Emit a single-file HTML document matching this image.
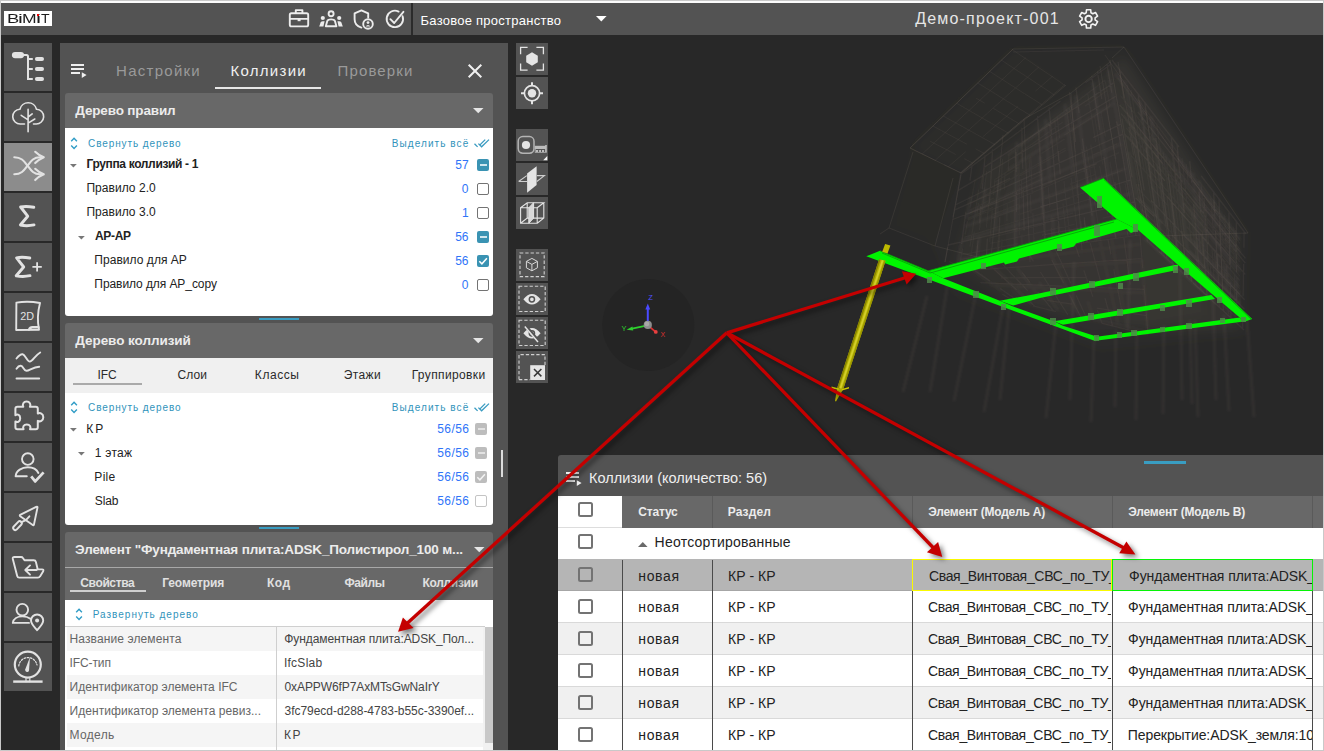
<!DOCTYPE html>
<html lang="ru"><head><meta charset="utf-8"><title>BIMIT</title>
<style>
html,body{margin:0;padding:0;}
body{width:1324px;height:751px;overflow:hidden;background:#282828;position:relative;font-family:"Liberation Sans",sans-serif;}
.a{position:absolute;}
.t{position:absolute;white-space:nowrap;}
.sb{position:absolute;left:4px;width:48px;height:48px;background:#535353;}
.tb{position:absolute;left:516px;width:32px;height:32px;background:#535353;}
svg{position:absolute;overflow:visible;}
.cb{position:absolute;box-sizing:border-box;border-radius:2px;}
</style></head><body>

<svg style="left:0;top:0" width="1324" height="751" viewBox="0 0 1324 751">
<circle cx="648.3" cy="324.9" r="46" fill="#242424"/>
<g id="giz">
<path d="M647.8 322V308" stroke="#4a4aff" stroke-width="2"/><path d="M647.8 303.6L650.2 309.6H645.4Z" fill="#4a4aff"/>
<path d="M645 325.8L631 328.9" stroke="#2fd02f" stroke-width="1.8"/><path d="M626.6 329.8L632.4 326.4L633.2 330.6Z" fill="#2fd02f"/>
<path d="M650.6 327.6L655 331.4" stroke="#e03030" stroke-width="1.8"/><circle cx="655.8" cy="331.9" r="1.9" fill="#e84040"/>
<circle cx="647.8" cy="324.9" r="4.1" fill="#8e8e8e"/><circle cx="646.9" cy="323.9" r="2.4" fill="#a8a8a8"/>
<text x="648.3" y="300.2" font-family="Liberation Sans, sans-serif" font-size="7.5" fill="#5050ff">Z</text>
<text x="621.6" y="331.4" font-family="Liberation Sans, sans-serif" font-size="7.5" fill="#2fd02f">Y</text>
<text x="660.4" y="336.6" font-family="Liberation Sans, sans-serif" font-size="7" fill="#d83030">X</text>
</g>
<defs><filter id="bl" x="-5%" y="-5%" width="110%" height="110%"><feGaussianBlur stdDeviation="0.5"/></filter><filter id="bl1" x="-5%" y="-5%" width="110%" height="110%"><feGaussianBlur stdDeviation="1.3"/></filter><filter id="bl2" x="-10%" y="-10%" width="120%" height="120%"><feGaussianBlur stdDeviation="5"/></filter></defs>
<g id="bld">
<g filter="url(#bl2)">
<path d="M1013 49L1124 47L1248 233L1246 335L1100 350L955 295L933 245L961 173L910 148Z" fill="#7a6a5e" fill-opacity="0.045" stroke="none"/>
<path d="M1013 49L910 148L961 173L1066 85Z" fill="#7a6a5e" fill-opacity="0.02" stroke="none"/>
<path d="M910 150L961 173L935 246L889 228Z" fill="#7a6a5e" fill-opacity="0.015" stroke="none"/>
<path d="M985 165L1110 66L1140 232L1148 330L1010 300L955 262Z" fill="#7a6a5e" fill-opacity="0.09" stroke="none"/>
<path d="M1110 66L1126 58L1236 232L1238 328L1148 332L1140 232Z" fill="#7a6a5e" fill-opacity="0.11" stroke="none"/>
<path d="M1040 120L1112 80L1200 215L1205 315L1090 335L1015 298L1005 200Z" fill="#7a6a5e" fill-opacity="0.06" stroke="none"/>
</g>
<g fill="none" stroke="#85766a" filter="url(#bl1)">
<path d="M970.8 196.8L966.5 218.5M962.2 240.2L958.0 262.0M985.6 188.0L982.6 211.8M979.6 235.5L976.6 259.2M998.9 180.2L997.0 205.7M997.0 205.7L995.1 231.3M1016.9 141.9L1016.5 169.8M1016.5 169.8L1016.1 197.7M1016.1 197.7L1015.7 225.6M1015.7 225.6L1015.3 253.5M1039.9 156.0L1041.5 187.1M1041.5 187.1L1043.1 218.1M1045.5 119.3L1047.7 151.4M1047.7 151.4L1050.0 183.5M1052.2 215.6L1054.5 247.7M1064.9 104.0L1068.9 139.0M1068.9 139.0L1073.0 173.9M1075.8 95.4L1080.9 131.9M1080.9 131.9L1085.9 168.5M1085.9 168.5L1091.0 205.0M1091.0 205.0L1096.0 241.5M1092.8 82.0L1099.4 121.0M1099.4 121.0L1106.0 160.0M1106.0 160.0L1112.6 199.1M1108.0 70.0L1116.0 111.2M1116.0 111.2L1124.0 152.5M1124.0 152.5L1132.0 193.8M1132.0 193.8L1140.0 235.0M1008.0 154.9L1041.9 129.8M1041.9 129.8L1075.9 104.6M1007.3 169.9L1043.0 147.5M1043.0 147.5L1078.7 125.2M1078.7 125.2L1114.4 102.8M967.4 213.7L1006.1 196.1M1006.1 196.1L1044.8 178.6M1044.8 178.6L1083.5 161.0M1083.5 161.0L1122.2 143.4M964.9 226.7L1005.4 212.1M1005.4 212.1L1046.0 197.4M1046.0 197.4L1086.5 182.8M1086.5 182.8L1127.0 168.1M962.3 240.0L1004.7 228.3M1004.7 228.3L1047.1 216.7M1047.1 216.7L1089.5 205.0M1089.5 205.0L1131.9 193.3M958.4 259.8L1003.6 252.5M1003.6 252.5L1048.8 245.2M1094.0 238.0L1139.2 230.7" stroke-opacity="0.09" stroke-width="3"/>
<path d="M1129.0 152.0L1136.5 195.0M1124.7 80.4L1131.6 121.7M1131.6 121.7L1138.4 162.9M1145.3 204.2L1152.1 245.5M1139.6 100.5L1145.6 139.3M1145.6 139.3L1151.5 178.2M1151.5 178.2L1157.5 217.0M1157.5 217.0L1163.5 255.9M1151.2 116.1L1156.4 153.1M1156.4 153.1L1161.7 190.0M1161.7 190.0L1167.0 227.0M1171.2 201.1L1175.9 236.3M1175.9 236.3L1180.5 271.5M1179.1 181.6L1182.9 214.7M1182.9 214.7L1186.8 247.7M1186.8 247.7L1190.6 280.7M1193.0 172.6L1195.8 202.8M1195.8 202.8L1198.6 232.9M1198.6 232.9L1201.4 263.0M1201.4 263.0L1204.2 293.2M1198.8 180.5L1201.3 209.6M1201.3 209.6L1203.7 238.8M1203.7 238.8L1206.2 268.0M1206.2 268.0L1208.6 297.2M1214.0 200.9L1215.5 227.6M1217.1 254.4L1218.6 281.1M1226.0 264.8L1227.0 289.8M1236.7 277.1L1236.9 300.2M1115.3 73.7L1146.5 115.3M1177.7 156.9L1208.8 198.5M1208.8 198.5L1240.0 240.0M1149.6 136.3L1179.8 175.1M1179.8 175.1L1209.9 213.8M1209.9 213.8L1240.0 252.5M1183.0 203.1L1211.5 237.5M1211.5 237.5L1240.0 271.8M1186.6 234.8L1213.3 264.2M1213.3 264.2L1240.0 293.6M1136.7 196.3L1162.5 223.3M1188.4 250.2L1214.2 277.2M1214.2 277.2L1240.0 304.2M1144.0 238.0L1168.0 260.0M1168.0 260.0L1192.0 282.0M1192.0 282.0L1216.0 304.0" stroke-opacity="0.09" stroke-width="3"/>
<path d="M961.7 261.4L975.0 271.3M975.0 271.3L988.2 281.1M988.2 281.1L1001.5 290.9M985.0 258.0L996.8 269.7M996.8 269.7L1008.6 281.4M1008.6 281.4L1020.4 293.1M1020.4 293.1L1032.2 304.7M1017.2 268.2L1027.6 281.7M1027.6 281.7L1038.0 295.1M1039.0 281.8L1048.6 296.4M1048.6 296.4L1058.2 310.9M1048.3 248.6L1056.1 265.4M1056.1 265.4L1063.9 282.2M1063.9 282.2L1071.7 299.1M1071.7 299.1L1079.5 315.9M1087.6 300.9L1094.1 319.3M1100.0 240.9L1104.5 261.9M1104.5 261.9L1109.0 283.0M1109.0 283.0L1113.6 304.0M1113.6 304.0L1118.1 325.0M1111.6 239.2L1115.4 261.2M1115.4 261.2L1119.2 283.1M1119.2 283.1L1123.0 305.1M1123.0 305.1L1126.8 327.0M1141.7 259.3L1143.7 283.5M1143.7 283.5L1145.8 307.7M1145.8 307.7L1147.8 331.9M963.1 265.6L1007.5 260.2M1007.5 260.2L1051.9 254.9M1051.9 254.9L1096.3 249.5M1096.3 249.5L1140.8 244.2M1057.3 266.5L1099.7 263.7M1099.7 263.7L1142.1 260.9M990.2 284.6L1028.8 286.7M1028.8 286.7L1067.5 288.7M1067.5 288.7L1106.1 290.8M1106.1 290.8L1144.8 292.8M1080.0 316.0L1114.0 324.0M1114.0 324.0L1148.0 332.0" stroke-opacity="0.07" stroke-width="3"/>
<g stroke-width="2.8" stroke-opacity="0.11"><path d="M927 296L903 392M975 298L954 401M1003 306L984 412M1056 322L1046 418M1094 340L1091 422M1116 330L1115 407M1137 330L1136 420M1164 325L1163 414M1190 320L1192 404M1195 320L1198 417M1224 315L1229 411M1247 320L1254 417"/><path d="M948 282L930 392M1010 300L1000 400M1074 262L1070 400M1130 240L1128 330M1180 270L1182 400M1213 298L1216 400"/></g>
</g>
<g fill="none" stroke="#85766a" stroke-width="1" filter="url(#bl)">
<path d="M1013 49L1124 47L1248 233M1013 49L910 148L961 173L1066 85M961 173L1024 119L1071 93L1110 62M913 152L889 228L935 246L953 178M1110 60L1140 232M1124 47L1112 58M1248 233L1160 236M935 246L1000 263M889 228L880 234" stroke-opacity="0.17"/>
<path d="M1105 55L1235 240M1100 66L1128 236M1118 62L1150 236M1071 93L1082 250M1024 119L1030 262M1003 135L990 268M961 175L945 262M1013 52L1104 50" stroke-opacity="0.13"/>
<path d="M1013.1 49.0L995.9 65.5M995.9 65.5L978.7 82.0M978.7 82.0L961.6 98.5M961.6 98.5L944.4 115.0M944.4 115.0L927.2 131.5M927.2 131.5L910.1 148.0M1025.7 57.6L1008.5 73.7M1008.5 73.7L991.2 89.7M991.2 89.7L974.0 105.8M974.0 105.8L956.7 121.9M956.7 121.9L939.5 137.9M939.5 137.9L922.2 154.0M1039.1 66.7L1021.8 82.3M1021.8 82.3L1004.5 97.9M1004.5 97.9L987.1 113.5M987.1 113.5L969.8 129.1M969.8 129.1L952.5 144.7M952.5 144.7L935.1 160.3M1052.8 76.1L1035.4 91.2M1018.0 106.3L1000.6 121.4M1000.6 121.4L983.2 136.5M965.7 151.7L948.3 166.8M1065.1 84.4L1047.6 99.1M1047.6 99.1L1030.1 113.8M1030.1 113.8L1012.6 128.5M1012.6 128.5L995.2 143.2M995.2 143.2L977.7 157.9M977.7 157.9L960.2 172.6M1012.3 49.6L1021.2 55.6M1021.2 55.6L1030.0 61.6M1030.0 61.6L1038.8 67.6M1038.8 67.6L1047.7 73.6M1047.7 73.6L1056.5 79.6M1056.5 79.6L1065.3 85.6M1001.4 60.1L1010.2 65.9M1010.2 65.9L1019.0 71.7M1019.0 71.7L1027.8 77.5M1027.8 77.5L1036.6 83.3M1036.6 83.3L1045.4 89.1M1045.4 89.1L1054.2 94.9M989.7 71.4L998.4 77.0M998.4 77.0L1007.2 82.6M1007.2 82.6L1015.9 88.2M1015.9 88.2L1024.7 93.8M1024.7 93.8L1033.5 99.3M1033.5 99.3L1042.2 104.9M977.7 83.0L986.4 88.3M986.4 88.3L995.1 93.7M995.1 93.7L1003.8 99.1M1003.8 99.1L1012.5 104.5M1012.5 104.5L1021.2 109.8M1021.2 109.8L1030.0 115.2M976.0 98.1L984.7 103.2M993.4 108.4L1002.1 113.6M1002.1 113.6L1010.8 118.8M1010.8 118.8L1019.5 124.0M956.6 103.2L965.2 108.2M965.2 108.2L973.9 113.2M973.9 113.2L982.5 118.2M982.5 118.2L991.2 123.2M991.2 123.2L999.8 128.2M999.8 128.2L1008.5 133.2M943.3 116.0L951.9 120.8M951.9 120.8L960.5 125.5M960.5 125.5L969.1 130.3M969.1 130.3L977.7 135.0M977.7 135.0L986.3 139.8M986.3 139.8L994.9 144.6M932.9 126.0L941.4 130.6M941.4 130.6L950.0 135.2M950.0 135.2L958.6 139.8M958.6 139.8L967.1 144.3M975.7 148.9L984.3 153.5M930.1 141.2L938.7 145.6M938.7 145.6L947.2 150.0M947.2 150.0L955.7 154.4M964.3 158.7L972.8 163.1M910.0 148.0L918.5 152.2M918.5 152.2L927.0 156.3M927.0 156.3L935.5 160.5M944.0 164.7L952.5 168.8M952.5 168.8L961.0 173.0" stroke-opacity="0.11" stroke-width="1"/>
<path d="M961.0 173.0L958.3 187.8M958.3 187.8L955.7 202.7M955.7 202.7L953.0 217.5M947.7 247.2L945.0 262.0M972.1 164.7L970.0 180.6M965.8 212.4L963.7 228.2M963.7 228.2L961.6 244.1M985.1 155.1L983.7 172.2M983.7 172.2L982.2 189.3M980.8 206.3L979.4 223.4M977.9 240.5L976.5 257.6M992.6 149.4L991.6 167.2M991.6 167.2L990.6 185.0M990.6 185.0L989.5 202.9M987.4 238.5L986.4 256.3M999.7 217.2L999.1 235.9M999.1 235.9L998.5 254.6M1016.0 152.1L1016.2 172.1M1016.3 192.1L1016.5 212.1M1021.8 127.7L1022.2 148.3M1022.2 148.3L1022.7 168.8M1023.1 189.4L1023.6 209.9M1023.6 209.9L1024.1 230.4M1037.5 116.0L1038.8 138.0M1038.8 138.0L1040.1 160.0M1040.1 160.0L1041.4 182.1M1041.4 182.1L1042.6 204.1M1042.6 204.1L1043.9 226.1M1043.9 226.1L1045.2 248.1M1049.2 107.3L1051.1 130.4M1051.1 130.4L1053.0 153.5M1053.0 153.5L1054.8 176.6M1054.8 176.6L1056.7 199.8M1056.7 199.8L1058.6 222.9M1058.6 222.9L1060.5 246.0M1058.2 150.9L1060.3 174.5M1069.6 92.1L1072.5 117.1M1072.5 117.1L1075.5 142.2M1084.2 217.3L1087.1 242.3M1075.9 87.4L1079.1 113.0M1082.4 138.7L1085.6 164.3M1085.6 164.3L1088.9 189.9M1088.9 189.9L1092.1 215.6M1091.7 75.6L1095.7 102.8M1095.7 102.8L1099.8 129.9M1103.9 157.0L1107.9 184.1M1107.9 184.1L1112.0 211.2M1112.0 211.2L1116.0 238.3M1097.4 71.4L1101.8 99.0M1114.9 182.0L1119.2 209.6M1107.0 64.3L1111.8 92.8M1116.6 121.4L1121.5 149.9M1121.5 149.9L1126.3 178.5M1126.3 178.5L1131.2 207.0M1131.2 207.0L1136.0 235.6M960.8 174.3L985.7 156.0M985.7 156.0L1010.7 137.7M1010.7 137.7L1035.6 119.4M1035.6 119.4L1060.5 101.1M1085.5 82.8L1110.4 64.5M984.8 166.9L1010.6 150.1M1010.6 150.1L1036.3 133.3M1036.3 133.3L1062.1 116.5M1062.1 116.5L1087.9 99.7M1087.9 99.7L1113.6 82.9M957.8 190.6L984.2 174.9M984.2 174.9L1010.5 159.2M1010.5 159.2L1036.9 143.5M1036.9 143.5L1063.2 127.7M1063.2 127.7L1089.6 112.0M1089.6 112.0L1115.9 96.3M955.2 205.0L982.8 191.5M982.8 191.5L1010.4 178.1M1093.2 137.7L1120.8 124.2M954.3 210.2L982.3 197.6M982.3 197.6L1010.4 184.9M1010.4 184.9L1038.4 172.3M1038.4 172.3L1066.5 159.6M1066.5 159.6L1094.5 147.0M1094.5 147.0L1122.5 134.3M952.6 219.5L981.5 208.3M981.5 208.3L1010.3 197.1M1010.3 197.1L1039.2 185.9M1039.2 185.9L1068.0 174.8M1068.0 174.8L1096.8 163.6M1040.3 206.9L1070.3 198.0M1100.4 189.0L1130.5 180.1M948.0 245.0L979.1 237.9M979.1 237.9L1010.1 230.7M1010.1 230.7L1041.2 223.5M1041.2 223.5L1072.2 216.4M1072.2 216.4L1103.2 209.2M1103.2 209.2L1134.3 202.0M1041.8 235.2L1073.5 229.3M1073.5 229.3L1105.2 223.3M1105.2 223.3L1137.0 217.4M1010.0 249.2L1042.3 244.2M1042.3 244.2L1074.5 239.3M1074.5 239.3L1106.8 234.3" stroke-opacity="0.12" stroke-width="1.3"/>
<path d="M975.1 180.0L972.6 193.6M972.6 193.6L970.1 207.3M967.6 221.0L965.1 234.6M962.6 248.3L960.1 262.0M978.7 189.7L976.5 203.9M976.5 203.9L974.4 218.1M974.4 218.1L972.2 232.4M972.2 232.4L970.0 246.6M982.7 174.1L980.6 188.5M978.5 202.9L976.5 217.3M974.4 231.6L972.4 246.0M972.4 246.0L970.3 260.4M986.7 171.0L984.9 185.7M984.9 185.7L983.1 200.5M983.1 200.5L981.3 215.3M981.3 215.3L979.4 230.0M977.6 244.8L975.8 259.6M989.3 197.3L987.8 212.6M987.8 212.6L986.3 227.8M994.8 179.4L993.6 195.0M992.3 210.7L991.0 226.3M991.0 226.3L989.7 242.0M1002.5 158.9L1001.6 175.1M1001.6 175.1L1000.6 191.3M997.9 240.1L997.0 256.3M1004.9 173.0L1004.2 189.5M1002.0 239.1L1001.2 255.6M1008.9 153.9L1008.4 170.7M1007.3 204.4L1006.8 221.3M1015.6 148.8L1015.4 166.2M1015.4 166.2L1015.3 183.7M1015.3 183.7L1015.1 201.2M1015.1 201.2L1014.9 218.6M1014.9 218.6L1014.8 236.1M1014.8 236.1L1014.6 253.6M1019.1 163.9L1019.2 181.7M1019.2 181.7L1019.2 199.5M1019.2 199.5L1019.3 217.3M1019.3 217.3L1019.3 235.0M1021.1 144.5L1021.3 162.5M1021.4 180.5L1021.6 198.5M1021.9 234.4L1022.1 252.4M1029.2 157.4L1029.8 176.1M1030.4 194.8L1031.0 213.5M1030.8 156.4L1031.5 175.2M1031.5 175.2L1032.2 194.1M1032.9 212.9L1033.6 231.7M1033.6 231.7L1034.3 250.5M1039.2 130.6L1040.4 150.3M1040.4 150.3L1041.6 170.0M1041.6 170.0L1042.8 189.7M1042.8 189.7L1044.0 209.3M1044.0 209.3L1045.2 229.0M1045.2 229.0L1046.4 248.7M1048.3 187.3L1049.8 207.5M1051.3 227.6L1052.8 247.7M1049.1 123.0L1050.9 143.6M1058.0 226.0L1059.8 246.6M1054.6 118.8L1056.7 139.9M1056.7 139.9L1058.8 161.0M1062.9 203.2L1065.0 224.4M1065.0 224.4L1067.1 245.5M1057.2 116.7L1059.5 138.1M1064.0 180.8L1066.2 202.2M1066.2 202.2L1068.5 223.6M1068.5 223.6L1070.7 244.9M1071.1 177.9L1073.7 199.8M1073.7 199.8L1076.3 221.7M1076.3 221.7L1078.9 243.7M1066.8 109.4L1069.6 131.7M1069.6 131.7L1072.4 153.9M1072.4 153.9L1075.2 176.2M1075.2 176.2L1077.9 198.4M1080.7 220.7L1083.5 242.9M1069.4 107.4L1072.4 129.9M1072.4 129.9L1075.3 152.4M1084.1 219.9L1087.1 242.4M1081.9 148.9L1085.2 172.0M1085.2 172.0L1088.5 195.0M1086.4 146.6L1089.9 170.0M1089.9 170.0L1093.4 193.5M1093.4 193.5L1097.0 216.9M1097.0 216.9L1100.5 240.3M1090.7 144.3L1094.5 168.1M1094.5 168.1L1098.2 191.9M1087.7 93.3L1091.7 117.5M1091.7 117.5L1095.7 141.8M1099.7 166.0L1103.7 190.2M1103.7 190.2L1107.7 214.4M1094.5 115.7L1098.7 140.2M1098.7 140.2L1102.9 164.6M1107.0 189.1L1111.2 213.6M1111.2 213.6L1115.3 238.0M1100.9 111.7L1105.4 136.7M1109.9 161.7L1114.4 186.7M1106.4 108.2L1111.2 133.7M1111.2 133.7L1116.0 159.2M1125.6 210.2L1130.4 235.7M1105.0 80.0L1110.0 105.8M1125.0 183.3L1130.0 209.2M1018.3 146.7L1040.0 130.0M1040.0 130.0L1061.7 113.3M1061.7 113.3L1083.3 96.7M1083.3 96.7L1105.0 80.0M1018.3 153.8L1040.5 138.0M1040.5 138.0L1062.7 122.1M1084.8 106.3L1107.0 90.4M995.4 179.2L1018.3 164.6M1064.2 135.3L1087.1 120.7M1087.1 120.7L1110.0 106.1M995.2 181.9L1018.3 167.6M1041.5 153.4L1064.6 139.1M994.7 188.4L1018.3 174.9M1018.3 174.9L1042.0 161.5M1042.0 161.5L1065.7 148.1M970.8 203.2L994.5 189.9M1018.3 176.7L1042.1 163.5M1042.1 163.5L1065.9 150.2M969.5 210.2L993.9 198.0M1018.3 185.8L1042.8 173.6M968.8 213.6L993.6 202.0M993.6 202.0L1018.3 190.3M1018.3 190.3L1043.1 178.6M1092.6 155.3L1117.3 143.6M968.0 218.4L993.2 207.4M1043.5 185.5L1068.7 174.5M1068.7 174.5L1093.9 163.6M1093.9 163.6L1119.0 152.6M967.7 220.0L993.0 209.2M993.0 209.2L1018.3 198.5M1018.3 198.5L1043.7 187.7M1043.7 187.7L1069.0 177.0M1069.0 177.0L1094.3 166.3M992.6 214.4L1018.3 204.4M1069.8 184.3L1095.5 174.2M992.3 218.2L1018.3 208.6M1044.4 199.0L1070.4 189.5M1070.4 189.5L1096.4 179.9M1096.4 179.9L1122.5 170.3M1018.3 214.8L1044.8 205.9M1044.8 205.9L1071.3 197.0M1071.3 197.0L1097.7 188.2M964.5 237.1L991.4 228.9M991.4 228.9L1018.3 220.7M1018.3 220.7L1045.2 212.6M1045.2 212.6L1072.1 204.4M1072.1 204.4L1099.0 196.2M990.9 235.2L1018.3 227.9M1045.7 220.5L1073.1 213.1M990.7 237.7L1018.3 230.7M1018.3 230.7L1045.9 223.6M1101.1 209.5L1128.7 202.4M990.3 243.4L1018.3 237.1M1018.3 237.1L1046.4 230.8M1046.4 230.8L1074.4 224.4M1102.5 218.1L1130.5 211.8M961.3 254.8L989.8 249.3M989.8 249.3L1018.3 243.7M960.5 259.5L989.4 254.6M989.4 254.6L1018.3 249.7M1047.3 244.8L1076.2 239.9M1076.2 239.9L1105.1 235.1M960.0 262.0L989.2 257.5M1018.3 253.0L1047.5 248.5M1047.5 248.5L1076.7 244.0" stroke-opacity="0.08" stroke-width="1.2"/>
<path d="M1122.0 118.7L1127.0 148.0M1127.0 148.0L1132.0 177.3M1119.5 69.7L1124.2 98.3M1128.9 126.9L1133.6 155.5M1138.3 184.1L1143.0 212.7M1143.0 212.7L1147.7 241.3M1131.0 106.8L1135.4 134.7M1135.4 134.7L1139.8 162.6M1139.8 162.6L1144.2 190.4M1138.1 93.9L1142.1 120.6M1146.0 147.4L1150.0 174.1M1150.0 174.1L1154.0 200.8M1154.0 200.8L1157.9 227.6M1157.9 227.6L1161.9 254.3M1144.8 102.6L1148.5 128.6M1148.5 128.6L1152.2 154.7M1152.2 154.7L1155.9 180.8M1155.9 180.8L1159.6 206.9M1163.3 232.9L1167.0 259.0M1155.8 137.8L1159.2 163.1M1159.2 163.1L1162.6 188.4M1162.6 188.4L1166.0 213.7M1166.0 213.7L1169.3 239.0M1169.3 239.0L1172.7 264.3M1168.1 173.7L1171.1 198.1M1171.1 198.1L1174.1 222.4M1174.1 222.4L1177.1 246.8M1171.2 136.9L1173.9 160.4M1173.9 160.4L1176.5 183.8M1181.8 230.7L1184.5 254.1M1184.5 254.1L1187.1 277.6M1177.0 144.4L1179.4 167.3M1179.4 167.3L1181.9 190.2M1181.9 190.2L1184.3 213.0M1189.1 258.8L1191.5 281.6M1189.8 161.0L1191.7 182.6M1193.6 204.2L1195.5 225.8M1195.5 225.8L1197.4 247.4M1197.4 247.4L1199.3 269.0M1199.3 269.0L1201.2 290.6M1199.0 191.7L1200.6 212.5M1202.2 233.4L1203.8 254.2M1203.8 254.2L1205.4 275.1M1205.4 275.1L1207.0 295.9M1203.9 197.9L1205.3 218.2M1205.3 218.2L1206.7 238.5M1206.7 238.5L1208.1 258.9M1213.6 192.0L1214.6 211.2M1215.5 230.4L1216.5 249.6M1216.5 249.6L1217.5 268.9M1218.4 288.1L1219.4 307.3M1219.0 198.9L1219.7 217.6M1219.7 217.6L1220.4 236.3M1220.4 236.3L1221.2 255.0M1221.2 255.0L1221.9 273.6M1221.9 273.6L1222.7 292.3M1222.7 292.3L1223.4 311.0M1228.9 211.8L1229.2 229.5M1229.2 229.5L1229.6 247.2M1229.6 247.2L1229.9 264.9M1230.3 282.6L1230.6 300.3M1230.6 300.3L1231.0 318.0M1236.3 221.4L1236.3 238.4M1236.3 238.4L1236.4 255.3M1236.4 255.3L1236.5 272.3M1236.5 289.3L1236.6 306.2M1244.1 231.6L1243.9 247.8M1243.6 263.9L1243.4 280.1M1243.4 280.1L1243.1 296.3M1242.8 312.5L1242.6 328.7M1112.0 60.0L1134.3 89.0M1134.3 89.0L1156.7 118.0M1156.7 118.0L1179.0 147.0M1201.3 176.0L1223.7 205.0M1223.7 205.0L1246.0 234.0M1137.8 112.0L1159.4 139.1M1159.4 139.1L1181.0 166.2M1181.0 166.2L1202.6 193.3M1202.6 193.3L1224.1 220.4M1119.6 104.8L1140.6 130.4M1140.6 130.4L1161.6 156.0M1161.6 156.0L1182.6 181.6M1203.5 207.2L1224.5 232.8M1224.5 232.8L1245.5 258.4M1121.1 113.6L1141.8 138.5M1141.8 138.5L1162.6 163.5M1183.3 188.4L1204.0 213.3M1224.7 238.3L1245.4 263.2M1124.6 134.0L1144.7 157.4M1144.7 157.4L1164.8 180.8M1205.0 227.6L1225.1 251.0M1225.1 251.0L1245.2 274.4M1166.8 196.4L1186.3 218.4M1186.3 218.4L1205.9 240.4M1205.9 240.4L1225.4 262.4M1151.2 200.5L1169.9 220.4M1169.9 220.4L1188.6 240.2M1188.6 240.2L1207.3 260.1M1207.3 260.1L1226.0 280.0M1226.0 280.0L1244.6 299.8M1135.5 197.8L1153.7 216.4M1171.8 234.9L1190.0 253.5M1190.0 253.5L1208.1 272.1M1208.1 272.1L1226.3 290.6M1226.3 290.6L1244.4 309.2M1138.2 213.7L1155.9 231.0M1155.9 231.0L1173.5 248.4M1173.5 248.4L1191.2 265.8M1191.2 265.8L1208.9 283.1M1208.9 283.1L1226.6 300.5M1159.0 251.7L1176.0 267.3M1193.0 283.0L1210.0 298.7M1210.0 298.7L1227.0 314.3M1227.0 314.3L1244.0 330.0" stroke-opacity="0.12" stroke-width="1.3"/>
<path d="M1136.4 183.8L1141.4 212.0M1141.4 212.0L1146.4 240.3M1119.7 74.9L1124.5 102.9M1134.2 158.7L1139.1 186.7M1137.0 162.0L1141.8 189.5M1141.8 189.5L1146.5 217.1M1127.3 85.1L1131.8 112.2M1136.4 139.3L1140.9 166.4M1131.0 90.1L1135.4 116.8M1135.4 116.8L1139.8 143.5M1139.8 143.5L1144.2 170.2M1153.0 223.6L1157.4 250.3M1138.7 121.0L1142.9 147.3M1142.9 147.3L1147.2 173.6M1147.2 173.6L1151.4 200.0M1151.4 200.0L1155.7 226.3M1143.1 126.7L1147.2 152.5M1147.2 152.5L1151.3 178.3M1159.4 230.0L1163.5 255.8M1140.1 102.3L1144.1 128.0M1144.1 128.0L1148.2 153.7M1156.2 205.1L1160.2 230.8M1160.2 230.8L1164.3 256.5M1145.6 109.6L1149.4 134.7M1164.6 235.2L1168.4 260.3M1149.6 115.0L1153.3 139.7M1156.9 164.4L1160.6 189.1M1160.6 189.1L1164.2 213.7M1164.2 213.7L1167.9 238.4M1167.9 238.4L1171.5 263.1M1170.0 240.5L1173.5 264.9M1156.7 124.5L1160.0 148.4M1160.0 148.4L1163.4 172.3M1166.8 196.2L1170.1 220.1M1170.1 220.1L1173.5 244.0M1173.5 244.0L1176.8 267.9M1163.1 152.2L1166.3 175.8M1166.3 175.8L1169.5 199.4M1172.8 222.9L1176.0 246.5M1165.8 155.8L1168.9 179.0M1168.9 179.0L1172.1 202.3M1172.1 202.3L1175.2 225.5M1178.3 248.8L1181.4 272.0M1169.5 160.5L1172.5 183.3M1172.5 183.3L1175.4 206.2M1175.4 206.2L1178.4 229.0M1178.4 229.0L1181.4 251.8M1181.4 251.8L1184.3 274.7M1170.6 143.1L1173.4 165.5M1173.4 165.5L1176.2 187.9M1176.2 187.9L1179.0 210.3M1179.0 210.3L1181.8 232.7M1181.8 232.7L1184.6 255.1M1184.6 255.1L1187.4 277.4M1176.5 169.4L1179.1 191.4M1181.8 213.5L1184.5 235.5M1176.9 151.5L1179.4 173.2M1189.6 260.0L1192.1 281.7M1182.0 158.4L1184.4 179.5M1184.4 179.5L1186.7 200.7M1189.0 221.8L1191.4 243.0M1193.7 264.1L1196.1 285.3M1186.2 164.0L1188.4 184.7M1190.6 205.4L1192.7 226.1M1192.7 226.1L1194.9 246.8M1194.9 246.8L1197.1 267.5M1192.3 207.5L1194.4 228.0M1194.4 228.0L1196.5 248.4M1196.5 248.4L1198.5 268.9M1198.5 268.9L1200.6 289.4M1198.7 232.9L1200.6 252.9M1201.3 236.0L1203.1 255.6M1201.2 184.1L1202.8 203.2M1202.8 203.2L1204.4 222.2M1204.4 222.2L1205.9 241.3M1207.5 260.3L1209.1 279.4M1209.1 279.4L1210.6 298.4M1205.8 207.0L1207.2 225.7M1207.2 225.7L1208.6 244.4M1210.1 263.1L1211.5 281.8M1212.0 248.2L1213.3 266.5M1213.3 266.5L1214.5 284.8M1210.8 196.9L1212.0 214.9M1212.0 214.9L1213.2 232.9M1214.3 250.9L1215.5 269.0M1216.7 287.0L1217.9 305.0M1213.8 200.9L1214.8 218.6M1216.9 254.0L1218.0 271.6M1218.0 271.6L1219.1 289.3M1219.4 224.4L1220.2 241.6M1220.2 241.6L1221.1 258.8M1221.1 258.8L1222.0 275.9M1222.0 275.9L1222.8 293.1M1222.2 228.1L1223.0 244.9M1223.7 261.8L1224.5 278.6M1224.7 215.5L1225.3 232.0M1225.3 232.0L1226.0 248.5M1226.6 265.0L1227.2 281.5M1227.8 298.0L1228.4 314.5M1229.2 221.5L1229.6 237.5M1229.6 237.5L1230.0 253.5M1230.0 253.5L1230.5 269.5M1233.7 227.6L1234.0 243.1M1234.0 243.1L1234.2 258.6M1234.5 274.1L1234.7 289.6M1234.7 289.6L1235.0 305.2M1235.0 305.2L1235.2 320.7M1235.3 229.7L1235.5 245.0M1235.5 245.0L1235.6 260.4M1236.2 306.4L1236.4 321.8M1240.0 295.3L1240.0 310.2M1136.7 97.7L1157.3 125.3M1157.3 125.3L1178.0 153.0M1198.7 180.7L1219.3 208.3M1117.4 77.7L1137.8 104.8M1137.8 104.8L1158.2 131.8M1158.2 131.8L1178.7 158.9M1178.7 158.9L1199.1 185.9M1219.6 213.0L1240.0 240.0M1199.5 190.4L1219.8 217.0M1219.8 217.0L1240.0 243.5M1120.5 95.5L1140.4 121.1M1140.4 121.1L1160.3 146.8M1180.3 172.4L1200.2 198.1M1200.2 198.1L1220.1 223.7M1220.1 223.7L1240.0 249.4M1122.5 106.8L1142.1 131.5M1142.1 131.5L1161.7 156.3M1161.7 156.3L1181.2 181.0M1181.2 181.0L1200.8 205.8M1220.4 230.5L1240.0 255.3M1124.0 115.1L1143.3 139.2M1143.3 139.2L1162.6 163.3M1162.6 163.3L1182.0 187.3M1182.0 187.3L1201.3 211.4M1201.3 211.4L1220.7 235.5M1220.7 235.5L1240.0 259.6M1124.8 119.7L1144.0 143.4M1163.2 167.2L1182.4 190.9M1182.4 190.9L1201.6 214.6M1201.6 214.6L1220.8 238.3M1220.8 238.3L1240.0 262.0M1126.2 127.8L1145.2 150.9M1145.2 150.9L1164.1 174.0M1164.1 174.0L1183.1 197.0M1183.1 197.0L1202.1 220.1M1202.1 220.1L1221.0 243.2M1221.0 243.2L1240.0 266.3M1127.6 135.8L1146.3 158.3M1146.3 158.3L1165.1 180.7M1183.8 203.2L1202.5 225.6M1202.5 225.6L1221.3 248.0M1148.0 168.4L1166.4 189.9M1166.4 189.9L1184.8 211.5M1184.8 211.5L1203.2 233.1M1221.6 254.6L1240.0 276.2M1131.0 155.3L1149.2 176.2M1149.2 176.2L1167.4 197.1M1167.4 197.1L1185.5 218.0M1185.5 218.0L1203.7 238.9M1203.7 238.9L1221.8 259.8M1221.8 259.8L1240.0 280.6M1150.9 186.5L1168.7 206.5M1186.5 226.5L1204.3 246.5M1222.2 266.5L1240.0 286.5M1204.6 249.6L1222.3 269.2M1222.3 269.2L1240.0 288.9M1187.9 238.2L1205.2 257.0M1205.2 257.0L1222.6 275.8M1222.6 275.8L1240.0 294.6M1136.7 187.1L1153.9 205.5M1205.6 260.6L1222.8 278.9M1222.8 278.9L1240.0 297.3M1138.7 198.4L1155.6 215.9M1155.6 215.9L1172.4 233.4M1189.3 250.8L1206.2 268.3M1223.1 285.8L1240.0 303.2M1140.4 208.2L1157.0 224.9M1157.0 224.9L1173.6 241.6M1190.2 258.3L1206.8 274.9M1223.4 291.6L1240.0 308.3M1141.3 213.5L1157.8 229.8M1207.1 278.6L1223.6 294.9M1142.4 219.6L1158.7 235.4M1207.5 282.8L1223.7 298.5M1223.7 298.5L1240.0 314.3M1144.7 232.4L1160.6 247.2M1176.4 262.0L1192.3 276.7M1192.3 276.7L1208.2 291.5M1224.1 306.3L1240.0 321.0M1146.0 240.0L1161.7 254.2M1177.3 268.3L1193.0 282.5M1193.0 282.5L1208.7 296.7" stroke-opacity="0.08" stroke-width="1.2"/>
<path d="M949.4 261.4L960.0 268.0M1002.5 294.2L1013.1 300.8M969.9 267.1L980.0 274.2M980.0 274.2L990.1 281.3M1000.2 288.4L1010.3 295.5M1010.3 295.5L1020.4 302.6M980.2 257.1L989.4 265.3M989.4 265.3L998.5 273.5M998.5 273.5L1007.6 281.7M1007.6 281.7L1016.7 289.9M1025.8 298.1L1034.9 306.3M994.1 255.2L1002.5 264.1M1002.5 264.1L1010.9 273.1M1010.9 273.1L1019.4 282.0M1019.4 282.0L1027.8 290.9M1006.5 253.5L1014.3 263.1M1022.2 272.7L1030.0 282.3M1037.8 291.9L1045.7 301.4M1045.7 301.4L1053.5 311.0M1026.6 250.7L1033.5 261.4M1040.3 272.0L1047.2 282.7M1047.2 282.7L1054.1 293.3M1054.1 293.3L1060.9 304.0M1060.9 304.0L1067.8 314.7M1051.7 259.7L1057.7 271.4M1057.7 271.4L1063.6 283.1M1069.5 294.7L1075.4 306.4M1075.4 306.4L1081.3 318.1M1054.2 246.9L1059.7 259.0M1059.7 259.0L1065.2 271.1M1065.2 271.1L1070.7 283.2M1076.2 295.4L1081.7 307.5M1081.7 307.5L1087.2 319.6M1074.9 244.0L1079.4 257.2M1083.9 270.4L1088.4 283.7M1088.4 283.7L1092.9 296.9M1097.4 310.1L1101.9 323.3M1089.9 241.9L1093.7 255.9M1093.7 255.9L1097.5 270.0M1097.5 270.0L1101.3 284.0M1105.0 298.0L1108.8 312.0M1108.8 312.0L1112.6 326.0M1108.0 239.4L1110.9 254.4M1113.8 269.4L1116.7 284.3M1116.7 284.3L1119.6 299.3M1119.6 299.3L1122.5 314.3M1123.8 237.2L1125.9 253.1M1125.9 253.1L1128.1 268.9M1128.1 268.9L1130.2 284.7M1140.0 235.0L1141.3 251.7M1141.3 251.7L1142.7 268.3M1144.0 285.0L1145.3 301.7M1145.3 301.7L1146.7 318.3M1146.7 318.3L1148.0 335.0M1042.5 248.5L1075.0 244.0M1075.0 244.0L1107.5 239.5M1107.5 239.5L1140.0 235.0M960.3 270.9L990.5 268.8M990.5 268.8L1020.8 266.8M1020.8 266.8L1051.1 264.7M1051.1 264.7L1081.3 262.6M1081.3 262.6L1111.6 260.5M1111.6 260.5L1141.9 258.5M1000.9 277.9L1029.4 277.7M1029.4 277.7L1057.9 277.6M1057.9 277.6L1086.4 277.5M980.4 282.7L1007.7 283.8M1007.7 283.8L1035.0 284.9M1035.0 284.9L1062.4 286.1M1089.7 287.2L1117.0 288.3M1117.0 288.3L1144.4 289.4M1047.1 300.4L1072.0 304.2M1096.8 308.1L1121.6 311.9M1121.6 311.9L1146.5 315.7M1033.0 305.8L1056.0 311.7M1102.0 323.3L1125.0 329.2M1125.0 329.2L1148.0 335.0" stroke-opacity="0.1" stroke-width="1.2"/>
</g></g>
<g id="slab" fill="#00f400">
<path d="M866.3 256.3L880 250.8L928.2 270.8L943.2 278.3L999.8 300.7L1013.1 306.5L1053.9 321.3L1063 325.7L1096.6 336.5L1095.7 341.2Z"/>
<path d="M928.2 270.8L1116.6 219.1L1138.2 229.9L1131 233L1126.6 229.1L1076 243.5L1074 246.5L1062 249.5L1061 247.5L1019 258.5L1017 261.5L1005 264.5L1004 262.5L943.2 278.3Z"/>
<path d="M1080 187.5L1103.6 178.3L1252.2 319.1L1243.9 321.9L1239.7 317.4L1213.1 294.9L1178.1 265L1138.2 229.9L1116.6 219.1Z"/>
<path d="M999.8 300.7L1040 293.3L1174.8 265L1178.1 265L1177 270L1040 298L1013.1 305.5Z"/>
<path d="M1053.9 321.3L1211.4 294.9L1215 299L1063 324.7Z"/>
<path d="M1096.6 336.8L1239.7 317.6L1243.9 321.6L1095.7 340.8Z"/>
</g>
<g fill="none" stroke="#0a9a0a" stroke-width="1">
<path d="M880 250.8L928.2 270.8L1116.6 219.1M1080 187.5L1103.6 178.3M1104 179.5L1251 319M882 253L930 273L1114 222" stroke-opacity="0.8"/>
</g>
<g fill="#4f8a4a" fill-opacity="0.85">
<rect x="1097" y="196" width="5" height="12"/><rect x="1133" y="224" width="5" height="8"/><rect x="1094" y="225" width="6" height="11"/>
<rect x="1057" y="244" width="5" height="7"/><rect x="981" y="263" width="5" height="6"/><rect x="927" y="277" width="5" height="6"/>
<rect x="973" y="291" width="6" height="7"/><rect x="1001" y="304" width="5" height="6"/><rect x="1050" y="288" width="6" height="7"/>
<rect x="1089" y="281" width="6" height="7"/><rect x="1118" y="283" width="5" height="6"/><rect x="1133" y="273" width="6" height="8"/>
<rect x="1173" y="266" width="5" height="7"/><rect x="1184" y="268" width="5" height="7"/><rect x="1050" y="318" width="6" height="7"/>
<rect x="1088" y="313" width="6" height="7"/><rect x="1117" y="309" width="6" height="7"/><rect x="1160" y="305" width="5" height="6"/>
<rect x="1186" y="300" width="6" height="7"/><rect x="1217" y="297" width="5" height="6"/><rect x="1094" y="335" width="5" height="6"/>
<rect x="1117" y="332" width="5" height="6"/><rect x="1131" y="330" width="6" height="6"/><rect x="1160" y="327" width="5" height="5"/>
<rect x="1186" y="323" width="6" height="6"/><rect x="1220" y="318" width="5" height="5"/><rect x="1241" y="317" width="5" height="5"/>
</g>
<g id="pile">
<path d="M885.1 243.9L890.4 245.6L887.5 253.5L882.2 251.8Z" fill="#bdb800"/>
<path d="M879.1 259.2L885.6 260.7L843.2 389.3L837.2 388Z" fill="#b4af00"/>
<path d="M881.8 260L883.6 260.4L841.2 389L839.4 388.5Z" fill="#dcd83a" fill-opacity="0.75"/>
<path d="M879.1 259.2L880.5 259.6L838.5 388.3L837.2 388Z" fill="#858100"/>
<path d="M884.4 260.5L885.6 260.7L843.2 389.3L842 389Z" fill="#9a9600"/>
<path d="M837.2 388L843.2 389.3L836 401.5L835 401Z" fill="#b4af00"/>
<path d="M831.5 386.5L839 388.5L838.6 390L831.5 388.3ZM842 389L849 387L849 388.6L842 390.6Z" fill="#cfca00"/>
</g>
</svg>

<div class="a" style="left:0px;top:3px;width:1324px;height:32px;background:#535353;"></div>
<div class="a" style="left:411px;top:3px;width:2px;height:32px;background:#2b2b2b;"></div>
<div class="a" style="left:4px;top:11px;width:48px;height:15px;background:#fff;"></div>
<div class="t" id="logo" style="left:4px;top:10px;width:48px;height:17px;font-size:13px;line-height:17px;color:#1c1c1c"><span style="position:absolute;left:2.52px;top:0;transform-origin:0 0;transform:scaleX(1.410)">B</span><span style="position:absolute;left:13.98px;top:0;transform-origin:0 0;transform:scaleX(1.667)">i</span><span style="position:absolute;left:18.08px;top:0;transform-origin:0 0;transform:scaleX(1.349)">M</span><span style="position:absolute;left:31.71px;top:0;transform-origin:0 0;transform:scaleX(1.750)">i</span><span style="position:absolute;left:36.73px;top:0;transform-origin:0 0;transform:scaleX(1.081)">T</span></div>
<div class="a" style="left:37.1px;top:13.5px;width:2.3px;height:2.3px;background:#f00000;"></div>
<svg style="left:0;top:0" width="420" height="40">
<g stroke="#ececec" fill="none" stroke-linejoin="round" stroke-linecap="round" stroke-width="1.9">
<rect x="289.8" y="13.2" width="18.4" height="13.2" rx="1.6"/><path d="M295.8 13V10.1H302.4V13M290 18.9H308"/>
<circle cx="331.1" cy="13.7" r="2.5"/><path d="M325.8 26.3L327.2 21.2Q328 19.4 331.1 19.4T335 21.2L336.4 26.3Z"/>
<path d="M361.4 10.4L354.6 13.4V19.2C354.6 23 357.4 26.4 361.4 27.6M361.4 10.4L368.2 13.4V17.6"/>
<circle cx="368" cy="24" r="4.8"/>
<path d="M402.6 16.2A8.2 8.2 0 1 1 398.6 11.6"/><path d="M390.4 19.2L394.2 23L403.4 11.8" stroke-width="1.9"/>
</g>
<g fill="#ececec"><rect x="297.6" y="18.4" width="3" height="2.8"/>
<circle cx="322.8" cy="18" r="2.1"/><path d="M319.2 26.6L320.6 22.4Q321.2 21.2 323 21.2H324.6L323.4 26.6Z"/>
<circle cx="339.2" cy="18" r="2.1"/><path d="M342.8 26.6L341.4 22.4Q340.8 21.2 339 21.2H337.4L338.6 26.6Z"/>
<circle cx="368" cy="22.6" r="1.4"/><path d="M365.4 26.6Q368 23.6 370.6 26.6Z"/></g>
</svg>
<div class="t" style="left:420.55px;top:12px;font-size:13px;line-height:17px;color:#fff;letter-spacing:0.255px;">Базовое пространство</div>
<svg style="left:596px;top:16px" width="11" height="6"><path d="M0 0H10.6L5.3 5.4Z" fill="#fff"/></svg>
<div class="t" style="left:915.20px;top:9px;font-size:16px;line-height:19px;color:#e6e6e6;letter-spacing:1.186px;">Демо-проект-001</div>
<svg style="left:0;top:0" width="1324" height="40"><path d="M1090.97 12.74L1090.71 9.74L1086.49 9.74L1086.23 12.74L1084.45 13.77L1081.73 12.49L1079.61 16.15L1082.08 17.87L1082.08 19.93L1079.61 21.65L1081.73 25.31L1084.45 24.03L1086.23 25.06L1086.49 28.06L1090.71 28.06L1090.97 25.06L1092.75 24.03L1095.47 25.31L1097.59 21.65L1095.12 19.93L1095.12 17.87L1097.59 16.15L1095.47 12.49L1092.75 13.77Z" fill="none" stroke="#f4f4f4" stroke-width="1.6" stroke-linejoin="round"/><circle cx="1088.6" cy="18.9" r="3.2" fill="none" stroke="#f4f4f4" stroke-width="1.9"/></svg>
<div class="sb" style="top:43px;background:#535353"></div>
<div class="sb" style="top:93px;background:#535353"></div>
<div class="sb" style="top:143px;background:#8c8c8c"></div>
<div class="sb" style="top:193px;background:#535353"></div>
<div class="sb" style="top:243px;background:#535353"></div>
<div class="sb" style="top:293px;background:#535353"></div>
<div class="sb" style="top:343px;background:#535353"></div>
<div class="sb" style="top:393px;background:#535353"></div>
<div class="sb" style="top:443px;background:#535353"></div>
<div class="sb" style="top:493px;background:#535353"></div>
<div class="sb" style="top:543px;background:#535353"></div>
<div class="sb" style="top:593px;background:#535353"></div>
<div class="sb" style="top:643px;background:#535353"></div>
<svg style="left:4px;top:43px" width="48" height="48" viewBox="0 0 48 48"><g fill="#e2e2e2"><rect x="7.9" y="8.9" width="12.2" height="6.3" rx="3.15"/><rect x="30.9" y="14.1" width="9.1" height="3.9" rx="1.95"/><rect x="30.9" y="24.1" width="9.1" height="3.9" rx="1.95"/><rect x="30.9" y="34.1" width="9.1" height="3.9" rx="1.95"/></g><path d="M19 12H22.5Q24 12 24 13.5V36.1H28.8M24 16H28.8M24 26H28.8" stroke="#e2e2e2" stroke-width="2" fill="none"/></svg>
<svg style="left:4px;top:93px" width="48" height="48" viewBox="0 0 48 48"><g stroke="#e2e2e2" fill="none" stroke-linecap="round" stroke-linejoin="round" stroke-width="1.6"><path d="M29.5 31H32A7.2 7.2 0 0 0 32.5 16.2A8.55 8.55 0 0 0 15.9 16.2A7.2 7.2 0 0 0 16.4 31H20.5"/><path d="M24.1 16.4V38.8M24.1 26.8L17.2 22.3M24.1 24L28.2 20.9M24.1 30.1L30.8 26"/></g></svg>
<svg style="left:4px;top:143px" width="48" height="48" viewBox="0 0 48 48"><g stroke="#e2e2e2" fill="none" stroke-linecap="round" stroke-linejoin="round" stroke-width="2.1" stroke="#f0f0f0"><path d="M10.3 14.2C17.5 14.2 20 18 23.5 22.7S29.5 31.3 36 31.3H39"/><path d="M10.3 31.3C17.5 31.3 20 27.4 23.5 22.7S29.5 14.2 36 14.2H39"/><path d="M31.2 8.8Q35 12.6 39.8 14.2Q35 16.2 31.2 20.1M31.2 25.8Q35 29.6 39.8 31.3Q35 33.2 31.2 37.1"/></g></svg>
<svg style="left:4px;top:193px" width="48" height="48" viewBox="0 0 48 48"><g stroke="#e2e2e2" fill="none" stroke-linecap="round" stroke-linejoin="round" stroke-width="2.9"><path d="M29.8 14.2Q22 12.9 16.6 14L23.7 23.2L16.4 32Q23 33.4 30 31.9"/></g></svg>
<svg style="left:4px;top:243px" width="48" height="48" viewBox="0 0 48 48"><g stroke="#e2e2e2" fill="none" stroke-linecap="round" stroke-linejoin="round" stroke-width="2.9"><path d="M25.8 15Q18 13.7 12.6 14.8L19.7 24L12.2 32.8Q19 34.2 26 32.7"/></g><path d="M33.1 19.2V28.6M28.4 23.9H37.8" stroke="#e2e2e2" stroke-width="1.8" fill="none"/></svg>
<svg style="left:4px;top:293px" width="48" height="48" viewBox="0 0 48 48"><g stroke="#e2e2e2" fill="none" stroke-linecap="round" stroke-linejoin="round" stroke-width="1.9"><path d="M12.4 9.6Q24 7.6 36 10Q32.4 24 35 36.8L12.2 37Z"/><path d="M25 36.6Q26 34.2 28.4 34.2H34.4" stroke-width="2.4"/></g><text x="16.2" y="27.2" font-family="Liberation Sans, sans-serif" font-size="10.5" fill="#e2e2e2" textLength="13.8" lengthAdjust="spacingAndGlyphs">2D</text></svg>
<svg style="left:4px;top:343px" width="48" height="48" viewBox="0 0 48 48"><g stroke="#e2e2e2" fill="none" stroke-linecap="round" stroke-linejoin="round" stroke-width="1.9"><path d="M12.5 15.5Q16 11 18.7 11.3C21.5 11.8 23 18.6 25.9 18.6C28.5 18.6 31 12.5 36.2 9.5"/><path d="M12.5 25.8Q14.5 22.6 16.8 22.8C19.4 23 19.6 27.8 22.4 27.8C25.5 27.6 29 24 35.2 23.7"/><path d="M12.5 35.5H35.2"/></g></svg>
<svg style="left:4px;top:393px" width="48" height="48" viewBox="0 0 48 48"><g stroke="#e2e2e2" fill="none" stroke-linecap="round" stroke-linejoin="round" stroke-width="2"><path d="M13.4 13.8H19.3C18 11.5 19.5 8.6 22.6 8.6S27.2 11.5 25.9 13.8H31.8Q33.8 13.8 33.8 15.8V20.6C36 19.2 39.3 20.6 39.3 24.2S36 29.2 33.8 27.8V34.2Q33.8 36.2 31.8 36.2H26C27.2 34 26 31.6 22.8 31.6S18.4 34 19.6 36.2H13.4Q11.4 36.2 11.4 34.2V28.4C13.6 29.8 16.2 28.6 16.2 25.2S13.6 20.8 11.4 22.2V15.8Q11.4 13.8 13.4 13.8Z"/></g></svg>
<svg style="left:4px;top:443px" width="48" height="48" viewBox="0 0 48 48"><g stroke="#e2e2e2" fill="none" stroke-linecap="round" stroke-linejoin="round" stroke-width="1.9"><circle cx="23.8" cy="16.1" r="5.8"/><path d="M22.8 33.2H11.6C12 27.6 18 24.3 23.8 24.3S33 27 34.4 30"/></g><path d="M27.2 33.4L31.2 38.4L39.6 29.4" stroke="#e2e2e2" stroke-width="2.8" fill="none" stroke-linejoin="round"/></svg>
<svg style="left:4px;top:493px" width="48" height="48" viewBox="0 0 48 48"><g stroke="#e2e2e2" fill="none" stroke-linecap="round" stroke-linejoin="round" stroke-width="1.9"><path d="M16.6 21.6L32.2 13.9Q33.8 13.2 33.4 15L30 31.4Q29.6 33 28.4 31.8L16.2 23.2Q15.2 22.3 16.6 21.6Z"/><path d="M25.4 23.3L21.9 27.1L17.4 29.2"/><rect x="8.2" y="30.5" width="10.6" height="4.2" rx="2.1" transform="rotate(-46.5 13.5 32.6)"/></g></svg>
<svg style="left:4px;top:543px" width="48" height="48" viewBox="0 0 48 48"><g stroke="#e2e2e2" fill="none" stroke-linecap="round" stroke-linejoin="round" stroke-width="1.9"><path d="M33.7 26.2L31.9 19Q31.5 17.3 29.7 17.3H20.5L18.9 15Q18.3 14 17.1 14H10.6Q8.4 14 8.8 16L13.2 33Q13.6 34.6 15.2 34.6H34Q35.4 34.6 36 33.4L39.2 28.2Q40 26.4 38 26.4H33"/><path d="M32.6 27H21.6M26 22.4L21.3 27L26 31.6"/></g></svg>
<svg style="left:4px;top:593px" width="48" height="48" viewBox="0 0 48 48"><g stroke="#e2e2e2" fill="none" stroke-linecap="round" stroke-linejoin="round" stroke-width="1.9"><circle cx="18.3" cy="16.7" r="5.8"/><path d="M25 29.9H8.8C9.4 25.6 13.6 23.4 18.4 23.4C21.6 23.4 24.4 24.2 26.4 25.8"/><path d="M33.1 37.2C30 33.6 27 31 27 27.6A6.1 6.1 0 0 1 39.2 27.6C39.2 31 36.2 33.6 33.1 37.2Z"/></g><circle cx="33.1" cy="27.4" r="2" fill="#e2e2e2"/></svg>
<svg style="left:4px;top:643px" width="48" height="48" viewBox="0 0 48 48"><g stroke="#e2e2e2" fill="none" stroke-linecap="round" stroke-linejoin="round" stroke-width="1.8"><circle cx="23.8" cy="21.6" r="13" stroke-width="2.2"/><path d="M9.2 38.6H38.6" stroke-width="2.4" stroke-linecap="butt"/><path d="M22 34.6V38.6M25.8 34.6V38.6" stroke-width="1.2"/><path d="M14.8 23A9.2 9.2 0 0 1 33 22" stroke-width="1.2" stroke-dasharray="1.6 1.6"/></g><path d="M26 14L25 27.4A1.9 1.9 0 0 1 21.2 26.6Z" fill="#e2e2e2"/></svg>
<div class="tb" style="top:43px"></div>
<div class="tb" style="top:77px"></div>
<div class="tb" style="top:129px"></div>
<div class="tb" style="top:163px"></div>
<div class="tb" style="top:197px"></div>
<div class="tb" style="top:249px"></div>
<div class="tb" style="top:283px"></div>
<div class="tb" style="top:317px"></div>
<div class="tb" style="top:351px"></div>
<svg style="left:0;top:0" width="560" height="400"><path d="M520.6 54.2V47.4H527.6M536.4 47.4H543.4V54.2M543.4 63.4V70.2H536.4M527.6 70.2H520.6V63.4" stroke="#e4e4e4" stroke-width="1.3" fill="none"/><polygon points="532.00,52.30 537.80,55.65 537.80,62.35 532.00,65.70 526.20,62.35 526.20,55.65" fill="#e4e4e4"/><circle cx="532" cy="93.2" r="7.6" stroke="#e4e4e4" stroke-width="1.7" fill="none"/><circle cx="532" cy="93.2" r="4.2" fill="#e4e4e4"/><path d="M532 82.2V85.4M532 101V104.2M521 93.2H524.2M539.8 93.2H543" stroke="#e4e4e4" stroke-width="2"/><rect x="518.2" y="136.6" width="15.8" height="16.6" rx="4.6" stroke="#b4b4b4" stroke-width="1.5" fill="none"/><circle cx="526" cy="145" r="4.1" fill="#e4e4e4"/><rect x="534.8" y="145.8" width="12" height="6.9" fill="#bcbcbc"/><path d="M545.2 145H546.8V146H545.2Z" fill="#bcbcbc"/><path d="M535.6 148.9H545.1V149.9H535.6ZM535.6 149.9H536V152H535.6ZM538.1 149.9H539.1V152H538.1ZM541 149.9H542V152H541ZM544.1 149.9H545.1V152H544.1Z" fill="#535353"/><path d="M543.2 160.2L547.3 156.1V160.2Z" fill="#f4f4f4"/><path d="M527.1 173.6L536.6 166.2V185.1L527.1 192.7Z" fill="#e4e4e4"/><path d="M518.6 181.5L526.8 175.6M536.8 175.6H544.4L536.8 181.5M527 181.5H518.6" stroke="#cfcfcf" stroke-width="1.1" fill="none"/><path d="M520.6 207.8H537.2V223.2H520.6ZM520.6 207.8L527.2 202.7H543.8L537.2 207.8M543.8 202.7V218.1L537.2 223.2M520.6 223.2L527.2 218.1H543.8M527.2 202.7V218.1" stroke="#e4e4e4" stroke-width="1.1" fill="none"/><path d="M528.8 207.8L533.6 202.7V218.1L528.8 223.2Z" fill="#d8d8d8"/><path d="M528.8 207.8L533.6 202.7V218.1L528.8 223.2Z" fill="none" stroke="#e4e4e4" stroke-width="1"/><rect x="520" y="253" width="24.200000000000045" height="23.600000000000023" stroke="#d0d0d0" stroke-width="1.1" fill="none" stroke-dasharray="3.3 2"/><path d="M531.9 258.4L537.4 261.4V267.8L531.9 270.8L526.4 267.8V261.4ZM526.4 261.4L531.9 264.4L537.4 261.4M531.9 264.4V270.8" stroke="#d8d8d8" stroke-width="1" fill="none" stroke-linejoin="round"/><rect x="519" y="286.3" width="26.200000000000045" height="25.19999999999999" stroke="#d0d0d0" stroke-width="1.1" fill="none" stroke-dasharray="3.3 2"/><path d="M523.4 299.3Q531.9 288.8 540.6 299.3Q531.9 309.8 523.4 299.3Z" fill="#e4e4e4"/><circle cx="531.9" cy="299.3" r="2.6" fill="none" stroke="#535353" stroke-width="1.5"/><rect x="519" y="320.3" width="26.200000000000045" height="25.19999999999999" stroke="#d0d0d0" stroke-width="1.1" fill="none" stroke-dasharray="3.3 2"/><path d="M523.4 333.3Q531.9 322.8 540.6 333.3Q531.9 343.8 523.4 333.3Z" fill="#e4e4e4"/><circle cx="531.9" cy="333.3" r="2.6" fill="none" stroke="#535353" stroke-width="1.5"/><path d="M525.6 326L538.8 341.4" stroke="#535353" stroke-width="3.2"/><path d="M524.8 326.6L538 342" stroke="#e4e4e4" stroke-width="1.5"/><path d="M531 354.6H545V365M519 379.6V354.6H531M519 379.6H530" stroke="#d0d0d0" stroke-width="1.1" fill="none" stroke-dasharray="3.3 2"/><rect x="530.2" y="365.2" width="14.8" height="14.8" fill="#e6e6e6"/><path d="M534 369L541.4 376.4M541.4 369L534 376.4" stroke="#3a3a3a" stroke-width="1.5"/></svg>
<div class="a" style="left:60px;top:43px;width:448px;height:708px;background:#535353;"></div>
<svg style="left:71px;top:64px" width="16" height="15"><path d="M0 0h13v2H0zM0 4h13v2H0zM0 8h9v2H0zM10.8 8.2L15.6 11.1L10.8 14z" fill="#eee"/></svg>
<div class="t" style="left:116.10px;top:61px;font-size:15px;line-height:19px;color:#9a9a9a;letter-spacing:1.262px;">Настройки</div>
<div class="t" style="left:230.50px;top:61px;font-size:15px;line-height:19px;color:#f0f0f0;letter-spacing:1.279px;">Коллизии</div>
<div class="t" style="left:337.50px;top:61px;font-size:15px;line-height:19px;color:#9a9a9a;letter-spacing:1.150px;">Проверки</div>
<div class="a" style="left:215px;top:87px;width:106px;height:2px;background:#e6e6e6;"></div>
<svg style="left:468px;top:64px" width="14" height="14"><path d="M0.7 0.7L13.3 13.3M13.3 0.7L0.7 13.3" stroke="#f0f0f0" stroke-width="2" fill="none"/></svg>
<div class="a" style="left:65px;top:93px;width:428px;height:35px;background:#686868;border-radius:3px 3px 0 0;"></div>
<div class="t" style="left:75.30px;top:102px;font-size:13.5px;line-height:17px;color:#ececec;letter-spacing:-0.158px;font-weight:700;">Дерево правил</div>
<svg style="left:472.6px;top:107.6px" width="10.5" height="5.3"><path d="M0 0H10.5L5.25 5.3Z" fill="#e6e6e6"/></svg>
<div class="a" style="left:65px;top:128px;width:428px;height:188px;background:#fff;border-radius:0 0 3px 3px;"></div>
<svg style="left:70px;top:136.5px" width="8" height="13"><path d="M1.2 4.2L4.05 1.3L6.9 4.2M1.2 8.6L4.05 11.5L6.9 8.6" stroke="#2f9cc6" stroke-width="1.4" fill="none"/></svg>
<div class="t" style="left:88.00px;top:137px;font-size:10px;line-height:13px;color:#3193bb;letter-spacing:0.907px;">Свернуть дерево</div>
<div class="t" style="left:391.80px;top:137px;font-size:10px;line-height:13px;color:#3193bb;letter-spacing:1.068px;">Выделить всё</div>
<svg style="left:473.5px;top:138.9px" width="16" height="9"><path d="M0.5 4.8L3.6 7.9M4.4 4.6L7.6 7.8L15 0.6M11.2 0.6L6.2 5.6" stroke="#3a9bc1" stroke-width="1.3" fill="none"/></svg>
<div class="t" style="left:86.40px;top:156px;font-size:12px;line-height:16px;color:#222;letter-spacing:-0.347px;font-weight:700;">Группа коллизий - 1</div>
<div class="t" style="left:455.25px;top:157px;font-size:12px;line-height:16px;color:#2f74f8;letter-spacing:0.000px;">57</div>
<div class="cb" style="left:477px;top:159px;width:12px;height:12px;background:#3a93b3"></div>
<div class="a" style="left:479.5px;top:164.2px;width:7px;height:1.6px;background:#cfe6ee;"></div>
<svg style="left:70px;top:163.9px" width="7" height="4"><path d="M0 0H6.8L3.4 3.4Z" fill="#777"/></svg>
<div class="t" style="left:86.45px;top:180px;font-size:12px;line-height:16px;color:#222;letter-spacing:0.040px;">Правило 2.0</div>
<div class="t" style="left:461.75px;top:181px;font-size:12px;line-height:16px;color:#2f74f8;letter-spacing:0.000px;">0</div>
<div class="cb" style="left:477px;top:183px;width:12px;height:12px;border:1.5px solid #737373;background:#fff;border-radius:2px"></div>
<div class="t" style="left:86.45px;top:204px;font-size:12px;line-height:16px;color:#222;letter-spacing:0.040px;">Правило 3.0</div>
<div class="t" style="left:461.90px;top:205px;font-size:12px;line-height:16px;color:#2f74f8;letter-spacing:0.000px;">1</div>
<div class="cb" style="left:477px;top:207px;width:12px;height:12px;border:1.5px solid #737373;background:#fff;border-radius:2px"></div>
<div class="t" style="left:95.00px;top:228px;font-size:12px;line-height:16px;color:#222;letter-spacing:-0.313px;font-weight:700;">АР-АР</div>
<div class="t" style="left:455.20px;top:229px;font-size:12px;line-height:16px;color:#2f74f8;letter-spacing:0.000px;">56</div>
<div class="cb" style="left:477px;top:231px;width:12px;height:12px;background:#3a93b3"></div>
<div class="a" style="left:479.5px;top:236.2px;width:7px;height:1.6px;background:#cfe6ee;"></div>
<svg style="left:77.8px;top:235.9px" width="7" height="4"><path d="M0 0H6.8L3.4 3.4Z" fill="#777"/></svg>
<div class="t" style="left:94.35px;top:252px;font-size:12px;line-height:16px;color:#222;letter-spacing:0.038px;">Правило для АР</div>
<div class="t" style="left:455.20px;top:253px;font-size:12px;line-height:16px;color:#2f74f8;letter-spacing:0.000px;">56</div>
<div class="cb" style="left:477px;top:255px;width:12px;height:12px;background:#3a93b3"></div>
<svg style="left:477px;top:255px" width="12" height="12"><path d="M2.3 6.2L4.9 8.8L9.9 3.3" stroke="#fff" stroke-width="1.5" fill="none"/></svg>
<div class="t" style="left:94.35px;top:276px;font-size:12px;line-height:16px;color:#222;letter-spacing:-0.078px;">Правило для АР_copy</div>
<div class="t" style="left:461.75px;top:277px;font-size:12px;line-height:16px;color:#2f74f8;letter-spacing:0.000px;">0</div>
<div class="cb" style="left:477px;top:279px;width:12px;height:12px;border:1.5px solid #737373;background:#fff;border-radius:2px"></div>
<div class="a" style="left:259px;top:318px;width:40px;height:2px;background:#399dc2;"></div>
<div class="a" style="left:65px;top:323px;width:428px;height:35px;background:#686868;border-radius:3px 3px 0 0;"></div>
<div class="t" style="left:75.30px;top:332px;font-size:13.5px;line-height:17px;color:#ececec;letter-spacing:-0.057px;font-weight:700;">Дерево коллизий</div>
<svg style="left:472.6px;top:338px" width="10.5" height="5.3"><path d="M0 0H10.5L5.25 5.3Z" fill="#e6e6e6"/></svg>
<div class="a" style="left:65px;top:358px;width:428px;height:35px;background:#f0f0f0;"></div>
<div class="t" style="left:97.50px;top:367px;font-size:12px;line-height:16px;color:#2a2a2a;letter-spacing:-0.100px;">IFC</div>
<div class="t" style="left:177.60px;top:367px;font-size:12px;line-height:16px;color:#2a2a2a;letter-spacing:0.033px;">Слои</div>
<div class="t" style="left:254.85px;top:367px;font-size:12px;line-height:16px;color:#2a2a2a;letter-spacing:0.560px;">Классы</div>
<div class="t" style="left:343.70px;top:367px;font-size:12px;line-height:16px;color:#2a2a2a;letter-spacing:0.425px;">Этажи</div>
<div class="t" style="left:411.65px;top:367px;font-size:12px;line-height:16px;color:#2a2a2a;letter-spacing:0.380px;">Группировки</div>
<div class="a" style="left:73px;top:383px;width:69px;height:2px;background:#aaa;"></div>
<div class="a" style="left:65px;top:393px;width:428px;height:132px;background:#fff;border-radius:0 0 3px 3px;"></div>
<svg style="left:70px;top:400.5px" width="8" height="13"><path d="M1.2 4.2L4.05 1.3L6.9 4.2M1.2 8.6L4.05 11.5L6.9 8.6" stroke="#2f9cc6" stroke-width="1.4" fill="none"/></svg>
<div class="t" style="left:88.00px;top:401px;font-size:10px;line-height:13px;color:#3193bb;letter-spacing:0.907px;">Свернуть дерево</div>
<div class="t" style="left:391.80px;top:401px;font-size:10px;line-height:13px;color:#3193bb;letter-spacing:1.068px;">Выделить всё</div>
<svg style="left:473.5px;top:402.9px" width="16" height="9"><path d="M0.5 4.8L3.6 7.9M4.4 4.6L7.6 7.8L15 0.6M11.2 0.6L6.2 5.6" stroke="#3a9bc1" stroke-width="1.3" fill="none"/></svg>
<div class="t" style="left:86.25px;top:421px;font-size:12px;line-height:16px;color:#222;letter-spacing:1.950px;">КР</div>
<div class="t" style="left:437.15px;top:421px;font-size:12px;line-height:16px;color:#2f74f8;letter-spacing:0.462px;">56/56</div>
<div class="cb" style="left:475px;top:423px;width:12px;height:12px;background:#bdbdbd"></div>
<div class="a" style="left:477.5px;top:428.2px;width:7px;height:1.6px;background:#e2e2e2;"></div>
<svg style="left:70px;top:428.2px" width="7" height="4"><path d="M0 0H6.8L3.4 3.4Z" fill="#777"/></svg>
<div class="t" style="left:94.80px;top:445px;font-size:12px;line-height:16px;color:#222;letter-spacing:0.260px;">1 этаж</div>
<div class="t" style="left:437.15px;top:445px;font-size:12px;line-height:16px;color:#2f74f8;letter-spacing:0.462px;">56/56</div>
<div class="cb" style="left:475px;top:447px;width:12px;height:12px;background:#bdbdbd"></div>
<div class="a" style="left:477.5px;top:452.2px;width:7px;height:1.6px;background:#e2e2e2;"></div>
<svg style="left:77.8px;top:452.2px" width="7" height="4"><path d="M0 0H6.8L3.4 3.4Z" fill="#777"/></svg>
<div class="t" style="left:94.35px;top:469px;font-size:12px;line-height:16px;color:#222;letter-spacing:0.283px;">Pile</div>
<div class="t" style="left:437.15px;top:469px;font-size:12px;line-height:16px;color:#2f74f8;letter-spacing:0.462px;">56/56</div>
<div class="cb" style="left:475px;top:471px;width:12px;height:12px;background:#bdbdbd"></div>
<svg style="left:475px;top:471px" width="12" height="12"><path d="M2.3 6.2L4.9 8.8L9.9 3.3" stroke="#f4f4f4" stroke-width="1.5" fill="none"/></svg>
<div class="t" style="left:94.80px;top:493px;font-size:12px;line-height:16px;color:#222;letter-spacing:-0.117px;">Slab</div>
<div class="t" style="left:437.15px;top:493px;font-size:12px;line-height:16px;color:#2f74f8;letter-spacing:0.462px;">56/56</div>
<div class="cb" style="left:475px;top:495px;width:12px;height:12px;border:1.5px solid #c4c4c4;background:#fff"></div>
<div class="a" style="left:259px;top:527px;width:40px;height:2px;background:#399dc2;"></div>
<div class="a" style="left:501px;top:450px;width:2px;height:27px;background:#dcdcdc;"></div>
<div class="a" style="left:65px;top:532px;width:428px;height:68px;background:#686868;border-radius:3px 3px 0 0;"></div>
<div class="a" style="left:65px;top:567px;width:428px;height:1px;background:#a8a8a8;"></div>
<div class="t" style="left:75.05px;top:541px;font-size:13.5px;line-height:17px;color:#ececec;letter-spacing:-0.164px;font-weight:700;">Элемент "Фундаментная плита:ADSK_Полистирол_100 м...</div>
<svg style="left:473.5px;top:547px" width="10.5" height="5.3"><path d="M0 0H10.5L5.25 5.3Z" fill="#e6e6e6"/></svg>
<div class="t" style="left:80.35px;top:575px;font-size:12px;line-height:16px;color:#e0e0e0;letter-spacing:-0.393px;font-weight:700;">Свойства</div>
<div class="t" style="left:162.20px;top:575px;font-size:12px;line-height:16px;color:#e0e0e0;letter-spacing:-0.113px;font-weight:700;">Геометрия</div>
<div class="t" style="left:267.10px;top:575px;font-size:12px;line-height:16px;color:#e0e0e0;letter-spacing:0.400px;font-weight:700;">Код</div>
<div class="t" style="left:344.50px;top:575px;font-size:12px;line-height:16px;color:#e0e0e0;letter-spacing:-0.412px;font-weight:700;">Файлы</div>
<div class="t" style="left:422.40px;top:575px;font-size:12px;line-height:16px;color:#e0e0e0;letter-spacing:-0.293px;font-weight:700;">Коллизии</div>
<div class="a" style="left:70px;top:590px;width:76px;height:2px;background:#cfcfcf;"></div>
<div class="a" style="left:65px;top:600px;width:428px;height:151px;background:#fff;"></div>
<svg style="left:75.1px;top:607.5px" width="8" height="13"><path d="M1.2 4.2L4.05 1.3L6.9 4.2M1.2 8.6L4.05 11.5L6.9 8.6" stroke="#2f9cc6" stroke-width="1.4" fill="none"/></svg>
<div class="t" style="left:92.70px;top:608px;font-size:10px;line-height:13px;color:#3193bb;letter-spacing:1.003px;">Развернуть дерево</div>
<div class="a" style="left:65px;top:626px;width:420px;height:1px;background:#cfcfcf;"></div>
<div class="a" style="left:67px;top:627px;width:416px;height:24px;background:#f5f5f5;"></div>
<div class="t" style="left:69.55px;top:631px;font-size:12px;line-height:16px;color:#666;letter-spacing:0.109px;">Название элемента</div>
<div class="t" style="left:284.35px;top:631px;font-size:12px;line-height:16px;color:#444;letter-spacing:-0.098px;">Фундаментная плита:ADSK_Пол...</div>
<div class="t" style="left:69.40px;top:655px;font-size:12px;line-height:16px;color:#666;letter-spacing:-0.075px;">IFC-тип</div>
<div class="t" style="left:283.90px;top:655px;font-size:12px;line-height:16px;color:#444;letter-spacing:0.267px;">IfcSlab</div>
<div class="a" style="left:67px;top:675px;width:416px;height:24px;background:#f5f5f5;"></div>
<div class="t" style="left:69.55px;top:679px;font-size:12px;line-height:16px;color:#666;letter-spacing:0.020px;">Идентификатор элемента IFC</div>
<div class="t" style="left:284.55px;top:679px;font-size:12px;line-height:16px;color:#444;letter-spacing:-0.102px;">0xAPPW6fP7AxMTsGwNaIrY</div>
<div class="t" style="left:69.55px;top:703px;font-size:12px;line-height:16px;color:#666;letter-spacing:0.048px;">Идентификатор элемента ревиз...</div>
<div class="t" style="left:284.55px;top:703px;font-size:12px;line-height:16px;color:#444;letter-spacing:-0.041px;">3fc79ecd-d288-4783-b55c-3390ef...</div>
<div class="a" style="left:67px;top:723px;width:416px;height:24px;background:#f5f5f5;"></div>
<div class="t" style="left:69.55px;top:727px;font-size:12px;line-height:16px;color:#666;letter-spacing:0.330px;">Модель</div>
<div class="t" style="left:284.05px;top:727px;font-size:12px;line-height:16px;color:#444;letter-spacing:1.450px;">КР</div>
<div class="a" style="left:276px;top:627px;width:1px;height:124px;background:#cfcfcf;"></div>
<div class="a" style="left:483px;top:627px;width:10px;height:124px;background:#f1f1f1;"></div>
<div class="a" style="left:485px;top:627px;width:8px;height:116px;background:#c8c8c8;"></div>
<div class="a" style="left:558px;top:455px;width:766px;height:296px;background:#535353;border-radius:3px 0 0 0;"></div>
<svg style="left:566px;top:472px" width="16" height="15"><path d="M0 0h13v2H0zM0 4h13v2H0zM0 8h9v2H0zM10.8 8.2L15.6 11.1L10.8 14z" fill="#eee"/></svg>
<div class="t" style="left:589.05px;top:469px;font-size:14.5px;line-height:18px;color:#efefef;letter-spacing:0.006px;">Коллизии (количество: 56)</div>
<div class="a" style="left:1144px;top:461px;width:42px;height:3px;background:#399dc2;"></div>
<div class="a" style="left:558px;top:496px;width:766px;height:32px;background:#686868;"></div>
<div class="a" style="left:558px;top:496px;width:64px;height:32px;background:#fff;"></div>
<div class="a" style="left:712px;top:496px;width:1px;height:32px;background:#5a5a5a;"></div>
<div class="a" style="left:912px;top:496px;width:1px;height:32px;background:#5a5a5a;"></div>
<div class="a" style="left:1112px;top:496px;width:1px;height:32px;background:#5a5a5a;"></div>
<div class="a" style="left:1312px;top:496px;width:1px;height:32px;background:#5a5a5a;"></div>
<div class="t" style="left:638.35px;top:504px;font-size:12px;line-height:16px;color:#ececec;letter-spacing:-0.210px;font-weight:700;">Статус</div>
<div class="t" style="left:727.70px;top:504px;font-size:12px;line-height:16px;color:#ececec;letter-spacing:0.120px;font-weight:700;">Раздел</div>
<div class="t" style="left:928.30px;top:504px;font-size:12px;line-height:16px;color:#ececec;letter-spacing:-0.224px;font-weight:700;">Элемент (Модель А)</div>
<div class="t" style="left:1128.30px;top:504px;font-size:12px;line-height:16px;color:#ececec;letter-spacing:-0.224px;font-weight:700;">Элемент (Модель В)</div>
<div class="a" style="left:558px;top:528px;width:766px;height:31px;background:#fff;"></div>
<div class="a" style="left:558px;top:527px;width:64px;height:1px;background:#ddd;"></div>
<div class="cb" style="left:578px;top:502px;width:15px;height:15px;border:2px solid #737373;background:transparent;border-radius:2.5px"></div>
<div class="cb" style="left:578px;top:534px;width:15px;height:15px;border:2px solid #737373;background:transparent;border-radius:2.5px"></div>
<svg style="left:638.3px;top:542px" width="10" height="5"><path d="M0 5H9.6L4.8 0Z" fill="#6a6a6a"/></svg>
<div class="t" style="left:654.60px;top:533px;font-size:14px;line-height:18px;color:#222;letter-spacing:0.234px;">Неотсортированные</div>
<div class="a" style="left:558px;top:559px;width:766px;height:32px;background:#b5b5b5;"></div>
<div class="cb" style="left:578px;top:566.5px;width:15px;height:15px;border:2px solid #737373;background:transparent;border-radius:2.5px"></div>
<div class="t" style="left:638.25px;top:567px;font-size:14px;line-height:18px;color:#222;letter-spacing:0.650px;">новая</div>
<div class="t" style="left:728.00px;top:567px;font-size:14px;line-height:18px;color:#222;letter-spacing:0.017px;">КР - КР</div>
<div class="t" style="left:928.90px;top:567px;font-size:14px;line-height:18px;color:#222;letter-spacing:-0.318px;width:182.6px;overflow:hidden;">Свая_Винтовая_СВС_по_ТУ_2</div>
<div class="t" style="left:1129.10px;top:567px;font-size:14px;line-height:18px;color:#222;letter-spacing:-0.057px;width:182.9px;overflow:hidden;">Фундаментная плита:ADSK_Полистирол</div>
<div class="a" style="left:558px;top:591px;width:766px;height:32px;background:#fff;"></div>
<div class="cb" style="left:578px;top:598.5px;width:15px;height:15px;border:2px solid #737373;background:transparent;border-radius:2.5px"></div>
<div class="t" style="left:638.25px;top:598px;font-size:14px;line-height:18px;color:#222;letter-spacing:0.650px;">новая</div>
<div class="t" style="left:728.00px;top:598px;font-size:14px;line-height:18px;color:#222;letter-spacing:0.017px;">КР - КР</div>
<div class="t" style="left:927.90px;top:598px;font-size:14px;line-height:18px;color:#222;letter-spacing:-0.318px;width:183.6px;overflow:hidden;">Свая_Винтовая_СВС_по_ТУ_2</div>
<div class="t" style="left:1128.10px;top:598px;font-size:14px;line-height:18px;color:#222;letter-spacing:-0.057px;width:183.9px;overflow:hidden;">Фундаментная плита:ADSK_Полистирол</div>
<div class="a" style="left:558px;top:623px;width:766px;height:32px;background:#f0f0f0;"></div>
<div class="cb" style="left:578px;top:630.5px;width:15px;height:15px;border:2px solid #737373;background:transparent;border-radius:2.5px"></div>
<div class="t" style="left:638.25px;top:630px;font-size:14px;line-height:18px;color:#222;letter-spacing:0.650px;">новая</div>
<div class="t" style="left:728.00px;top:630px;font-size:14px;line-height:18px;color:#222;letter-spacing:0.017px;">КР - КР</div>
<div class="t" style="left:927.90px;top:630px;font-size:14px;line-height:18px;color:#222;letter-spacing:-0.318px;width:183.6px;overflow:hidden;">Свая_Винтовая_СВС_по_ТУ_2</div>
<div class="t" style="left:1128.10px;top:630px;font-size:14px;line-height:18px;color:#222;letter-spacing:-0.057px;width:183.9px;overflow:hidden;">Фундаментная плита:ADSK_Полистирол</div>
<div class="a" style="left:558px;top:655px;width:766px;height:32px;background:#fff;"></div>
<div class="cb" style="left:578px;top:662.5px;width:15px;height:15px;border:2px solid #737373;background:transparent;border-radius:2.5px"></div>
<div class="t" style="left:638.25px;top:662px;font-size:14px;line-height:18px;color:#222;letter-spacing:0.650px;">новая</div>
<div class="t" style="left:728.00px;top:662px;font-size:14px;line-height:18px;color:#222;letter-spacing:0.017px;">КР - КР</div>
<div class="t" style="left:927.90px;top:662px;font-size:14px;line-height:18px;color:#222;letter-spacing:-0.318px;width:183.6px;overflow:hidden;">Свая_Винтовая_СВС_по_ТУ_2</div>
<div class="t" style="left:1128.10px;top:662px;font-size:14px;line-height:18px;color:#222;letter-spacing:-0.057px;width:183.9px;overflow:hidden;">Фундаментная плита:ADSK_Полистирол</div>
<div class="a" style="left:558px;top:687px;width:766px;height:32px;background:#f0f0f0;"></div>
<div class="cb" style="left:578px;top:694.5px;width:15px;height:15px;border:2px solid #737373;background:transparent;border-radius:2.5px"></div>
<div class="t" style="left:638.25px;top:694px;font-size:14px;line-height:18px;color:#222;letter-spacing:0.650px;">новая</div>
<div class="t" style="left:728.00px;top:694px;font-size:14px;line-height:18px;color:#222;letter-spacing:0.017px;">КР - КР</div>
<div class="t" style="left:927.90px;top:694px;font-size:14px;line-height:18px;color:#222;letter-spacing:-0.318px;width:183.6px;overflow:hidden;">Свая_Винтовая_СВС_по_ТУ_2</div>
<div class="t" style="left:1128.10px;top:694px;font-size:14px;line-height:18px;color:#222;letter-spacing:-0.057px;width:183.9px;overflow:hidden;">Фундаментная плита:ADSK_Полистирол</div>
<div class="a" style="left:558px;top:719px;width:766px;height:32px;background:#fff;"></div>
<div class="cb" style="left:578px;top:726.5px;width:15px;height:15px;border:2px solid #737373;background:transparent;border-radius:2.5px"></div>
<div class="t" style="left:638.25px;top:726px;font-size:14px;line-height:18px;color:#222;letter-spacing:0.650px;">новая</div>
<div class="t" style="left:728.00px;top:726px;font-size:14px;line-height:18px;color:#222;letter-spacing:0.017px;">КР - КР</div>
<div class="t" style="left:927.90px;top:726px;font-size:14px;line-height:18px;color:#222;letter-spacing:-0.318px;width:183.6px;overflow:hidden;">Свая_Винтовая_СВС_по_ТУ_2</div>
<div class="t" style="left:1127.80px;top:726px;font-size:14px;line-height:18px;color:#222;letter-spacing:-0.086px;width:184.2px;overflow:hidden;">Перекрытие:ADSK_земля:100</div>
<div class="a" style="left:558px;top:590px;width:766px;height:1px;background:#a6a6a6;"></div>
<div class="a" style="left:558px;top:622px;width:766px;height:1px;background:#d9d9d9;"></div>
<div class="a" style="left:558px;top:654px;width:766px;height:1px;background:#d9d9d9;"></div>
<div class="a" style="left:558px;top:686px;width:766px;height:1px;background:#d9d9d9;"></div>
<div class="a" style="left:558px;top:718px;width:766px;height:1px;background:#d9d9d9;"></div>
<div class="a" style="left:558px;top:750px;width:766px;height:1px;background:#d9d9d9;"></div>
<div class="a" style="left:622px;top:560px;width:1px;height:191px;background:#4a4a4a;"></div>
<div class="a" style="left:712px;top:560px;width:1px;height:191px;background:#4a4a4a;"></div>
<div class="a" style="left:912px;top:560px;width:1px;height:191px;background:#4a4a4a;"></div>
<div class="a" style="left:1112px;top:560px;width:1px;height:191px;background:#4a4a4a;"></div>
<div class="a" style="left:1312px;top:560px;width:1px;height:191px;background:#4a4a4a;"></div>
<div class="a" style="left:912px;top:559px;width:200px;height:32px;box-sizing:border-box;border:1px solid #fafa00"></div>
<div class="a" style="left:1112px;top:559px;width:201px;height:32px;box-sizing:border-box;border:1px solid #06f406"></div>
<svg style="left:0;top:0;filter:drop-shadow(3.5px 3px 2.5px rgba(0,0,0,0.5))" width="1324" height="751" viewBox="0 0 1324 751">
<g stroke="#c40000" stroke-width="3.3" fill="none" stroke-linecap="butt">
<path d="M726.8 332.8L906 277.5"/>
<path d="M726.8 332.8L407 623.5"/>
<path d="M726.8 332.8L934 548.5"/>
<path d="M726.8 332.8L1124 548"/>
</g>
<g fill="#c40000">
<path d="M916.2 273.8L901.9 271.2L906.6 284.6Z"/>
<path d="M398.1 631.8L402.9 617.4L413.6 628.1Z"/>
<path d="M942.3 557L926.9 552.2L938.1 542.1Z"/>
<path d="M1135.4 554.4L1119.2 553.3L1126.4 541.4Z"/>
</g>
</svg>

<div class="a" style="left:0px;top:0px;width:1324px;height:1px;background:#c9c9c9;"></div>
<div class="a" style="left:0px;top:1px;width:1324px;height:2px;background:#fbfbfb;"></div>
<div class="a" style="left:0px;top:0px;width:1px;height:751px;background:#c9c9c9;"></div>
<div class="a" style="left:1323px;top:0px;width:1px;height:751px;background:#c9c9c9;"></div>
<div class="a" style="left:0px;top:750px;width:1324px;height:1px;background:#c9c9c9;"></div>
</body></html>
